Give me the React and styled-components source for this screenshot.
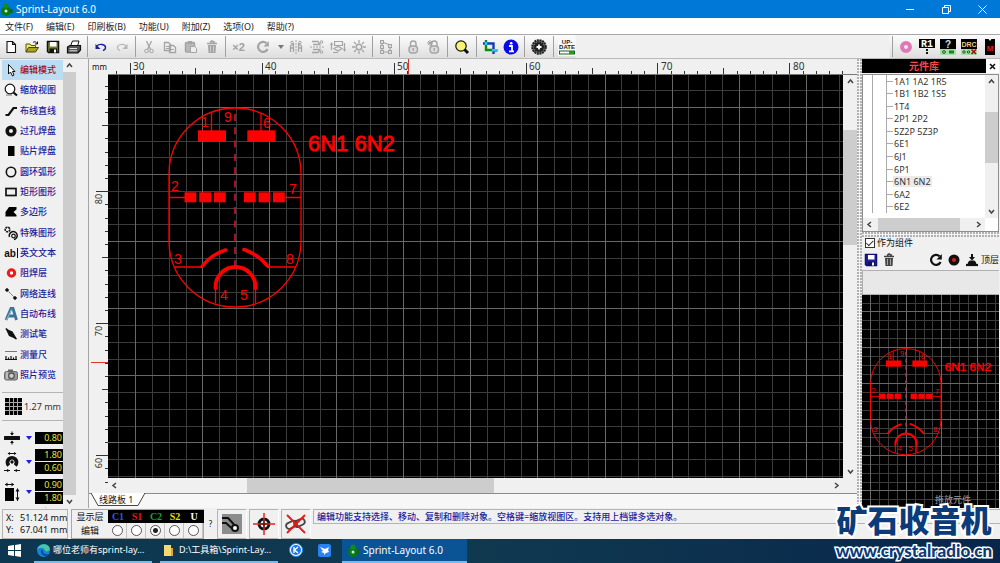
import React, { useEffect, useRef, useState } from "react";
import styled, { createGlobalStyle } from "styled-components";

const Global = createGlobalStyle`
  * { box-sizing: border-box; }
  html, body { margin: 0; padding: 0; }
  body { font-family: "Noto Sans", "Noto Sans CJK SC", sans-serif; font-size: 9px; line-height: 12px; color: #111; background: #f0f0f0; }
  button, input { font: inherit; color: inherit; }
  button { border: 0; padding: 0; margin: 0; background: none; }
  ul { list-style: none; margin: 0; padding: 0; }
`;

/* ---------- frame ---------- */
const Window = styled.div`
  display: flex;
  flex-direction: column;
  height: 100vh;
  min-height: 560px;
  min-width: 900px;
  overflow: hidden;
  position: relative;
`;

const TitleBar = styled.header`
  display: flex;
  align-items: center;
  height: 18px;
  background: #0078d7;
  color: #fff;
`;
const AppTitle = styled.h1`
  flex: 1;
  margin: 0 0 0 2px;
  font-size: 10px;
  line-height: 18px;
  font-weight: 400;
`;
const CaptionButton = styled.button`
  width: 36px;
  height: 18px;
  display: grid;
  place-items: center;
`;

const MenuBar = styled.nav`
  display: flex;
  gap: 13px;
  height: 16px;
  padding: 0 5px;
  background: #fff;
`;
const MenuItem = styled.button`
  line-height: 15px;
  white-space: nowrap;
  color: #222;
`;

const ToolBar = styled.div`
  display: flex;
  align-items: stretch;
  height: 25px;
  border-top: 1px solid #a8aaa8;
  border-bottom: 1px solid #b8bab8;
  background: linear-gradient(90deg, transparent 575px, #f0f0f0 576px calc(100% - 111px), transparent calc(100% - 110px)),
    linear-gradient(#fcfcfc, #dedede);
`;
const ToolButton = styled.button`
  width: ${(p) => p.$w || 21}px;
  display: grid;
  place-items: center;
`;
const Separator = styled.span`
  width: 6px;
  display: flex;
  justify-content: center;
  padding: 1px 0;
  &::before { content: ""; width: 1px; background: #a0a0a0; }
`;
const Spacer = styled.span`
  flex: 1;
`;

const Work = styled.main`
  flex: 1;
  min-height: 0;
  display: grid;
  grid-template-columns: 88px minmax(0, 1fr) 5px 138px;
`;

/* ---------- left tool column ---------- */
const ToolColumn = styled.aside`
  display: grid;
  grid-template-columns: 63px 13px;
  min-height: 0;
  overflow: hidden;
`;
const ToolBody = styled.div`
  padding-left: 2px;
  padding-top: 1px;
  overflow: hidden;
`;
const ModeList = styled.ul`
  display: grid;
  grid-template-rows: repeat(16, 1fr);
  height: 325px;
`;
const ModeButton = styled.button`
  display: grid;
  grid-template-columns: 18px 1fr;
  align-items: center;
  text-align: left;
  width: 100%;
  height: 100%;
  white-space: nowrap;
  font-weight: 500;
  color: ${(p) => (p.$on ? "#a01020" : "#1c1c9c")};
  background: ${(p) => (p.$on ? "#bcdcf4" : "transparent")};
  & > svg { justify-self: center; }
`;
const GridButton = styled.button`
  display: flex;
  align-items: center;
  justify-content: space-between;
  width: 100%;
  height: 29px;
  margin-top: 7px;
  padding: 0 2px 0 3px;
  border: solid #b4b4b4;
  border-width: 1px 0;
  color: #333;
`;
const SizeRow = styled.div`
  display: grid;
  grid-template-columns: 20px 13px 28px;
  align-items: center;
  margin-top: ${(p) => p.$gap}px;
  & > svg { justify-self: center; }
`;
const SizeFields = styled.div`
  display: grid;
  gap: 1px;
`;
const SizeField = styled.input`
  width: 28px;
  height: 12px;
  border: 0;
  padding: 0 1px 0 0;
  background: #000;
  color: #e4e42c;
  text-align: right;
`;

/* ---------- scroll bars ---------- */
const Bar = styled.div`
  display: flex;
  flex-direction: ${(p) => (p.$h ? "row" : "column")};
  background: #f0f0f0;
  min-width: 0;
  min-height: 0;
`;
const Arrow = styled.button`
  flex: 0 0 13px;
  display: grid;
  place-items: center;
`;
const Track = styled.div`
  flex: 1;
  display: flex;
  flex-direction: inherit;
  min-width: 0;
  min-height: 0;
`;
const Before = styled.span`
  flex: ${(p) => p.$n} 0 0;
`;
const Thumb = styled.span`
  flex: ${(p) => p.$n} 0 0;
  background: #cdcdcd;
`;

/* ---------- board ---------- */
const Board = styled.section`
  display: grid;
  grid-template-columns: 19px minmax(0, 1fr) 14px;
  grid-template-rows: 16px minmax(0, 1fr) 15px 15px;
  border-left: 1px solid #a4a4a4;
  min-height: 0;
`;
const Unit = styled.span`
  padding-left: 3px;
  line-height: 16px;
  font-size: 8px;
`;
const Drawing = styled.svg`
  display: block;
  width: 100%;
  height: 100%;
  overflow: hidden;
  background: ${(p) => p.$bg || "transparent"};
`;
const TopRulerCell = styled.div`
  grid-column: 2 / 4;
  min-width: 0;
`;
const SideRulerCell = styled.div`
  grid-row: 2 / 4;
  min-height: 0;
`;
const TabStrip = styled.div`
  grid-column: 1 / 4;
  display: flex;
  background: #f7f7f7;
  border-top: 1px solid #8c8c8c;
`;
const BoardTab = styled.button`
  position: relative;
  width: 60px;
  height: 14px;
  margin-top: -1px;
  & > svg { display: block; }
`;
const TabText = styled.span`
  position: absolute;
  left: 10px;
  top: 1px;
  white-space: nowrap;
`;
const Splitter = styled.div`
  background: radial-gradient(circle at 1px 1px, #b0b0b0 1px, transparent 1px) 0 0 / 3px 3px #f4f4f4;
  height: ${(p) => (p.$h ? `${p.$h}px` : "auto")};
`;

/* ---------- library ---------- */
const Library = styled.aside`
  display: flex;
  flex-direction: column;
  min-height: 0;
  padding-right: 1px;
`;
const LibraryHead = styled.div`
  display: flex;
  flex: 0 0 14px;
  background: #000;
`;
const LibraryTitle = styled.h2`
  flex: 1;
  margin: 0;
  text-align: center;
  font-size: 10px;
  line-height: 14px;
  font-weight: 700;
  color: #f8484c;
`;
const CloseButton = styled.button`
  width: 13px;
  display: grid;
  place-items: center;
  background: #fff;
`;
const ListBox = styled.div`
  flex: 0 0 158px;
  margin-top: 1px;
  display: grid;
  grid-template-columns: minmax(0, 1fr) 13px;
  grid-template-rows: minmax(0, 1fr) 13px;
  border: 1px solid #8f8f8f;
  background: #fff;
`;
const Tree = styled.ul`
  display: grid;
  grid-template-rows: repeat(11, 1fr);
  height: 138px;
  margin-left: 9px;
  padding-left: 13px;
  border-left: 1px solid #aaa;
`;
const Leaf = styled.li`
  display: flex;
  align-items: center;
  border-left: 1px solid #aaa;
  color: #333;
  &::before { content: ""; width: 6px; height: 1px; background: #aaa; }
`;
const LeafText = styled.button`
  padding: 0 1px;
  line-height: 11px;
  background: ${(p) => (p.$on ? "#ebebeb" : "transparent")};
`;
const CheckLabel = styled.label`
  display: flex;
  align-items: center;
  gap: 2px;
  height: 12px;
  padding-left: 3px;
`;
const Check = styled.input`
  appearance: none;
  width: 10px;
  height: 10px;
  margin: 0;
  border: 1px solid #333;
  background: #fff;
  display: grid;
  place-items: center;
  &:checked::after {
    content: "";
    width: 6px;
    height: 3px;
    border: solid #333;
    border-width: 0 0 1px 1px;
    transform: rotate(-45deg) translate(0, -1px);
  }
`;
const LibraryTools = styled.div`
  display: flex;
  align-items: center;
  height: 21px;
`;
const LibraryTool = styled.button`
  width: 18px;
  display: grid;
  place-items: center;
`;
const NameStrip = styled.div`
  flex: 0 0 25px;
  border: 1px solid #b0b0b0;
  border-right: 0;
  background: #e8e8e8;
`;
const Preview = styled.div`
  flex: 1;
  min-height: 0;
  position: relative;
`;
const DropHint = styled.span`
  position: absolute;
  right: 28px;
  bottom: 2px;
  color: #a0a0a0;
`;

/* ---------- status ---------- */
const StatusBar = styled.footer`
  display: flex;
  align-items: stretch;
  height: 31px;
  padding: 1px 0 0 2px;
`;
const Coordinates = styled.dl`
  display: grid;
  grid-template-columns: 14px 1fr;
  align-content: center;
  width: 66px;
  margin: 0 3px 0 0;
  padding: 0 3px 0 3px;
  border: 1px solid #b4b4b4;
  font-size: 9px;
`;
const Term = styled.dt``;
const Value = styled.dd`
  margin: 0;
  text-align: right;
  white-space: nowrap;
`;
const LayerSet = styled.div`
  display: flex;
  border: 1px solid #a8a8a8;
`;
const LayerCaption = styled.div`
  width: 36px;
  display: grid;
  grid-template-rows: 14px 14px;
  text-align: center;
  line-height: 14px;
  font-size: 9px;
`;
const Layer = styled.label`
  width: 19px;
  display: grid;
  grid-template-rows: 13px 1fr;
  place-items: center;
  border-right: 1px solid #c4c4c4;
`;
const LayerName = styled.span`
  width: 20px;
  margin-right: -1px;
  background: #000;
  color: ${(p) => p.$c};
  text-align: center;
  font: 700 10px/13px "Liberation Serif", serif;
`;
const Radio = styled.input`
  appearance: none;
  width: 11px;
  height: 11px;
  margin: 0;
  border: 1px solid #555;
  border-radius: 50%;
  background: #fff;
  &:checked { background: radial-gradient(circle, #222 2px, #fff 3px); }
`;
const HelpButton = styled.button`
  width: 13px;
  font-size: 8px;
`;
const StatusButton = styled.button`
  width: 30px;
  margin-right: 2px;
  display: grid;
  place-items: center;
  border: 1px solid #b4b4b4;
  border-right-color: #fff;
`;
const Hint = styled.p`
  flex: 1;
  margin: 0;
  height: 15px;
  padding-left: 3px;
  border: 1px solid #b4b4b4;
  border-right: 0;
  line-height: 14px;
  font-weight: 500;
  color: #1c1c9c;
  white-space: nowrap;
`;

const TaskBar = styled.footer`
  display: flex;
  height: 24px;
  gap: 8px;
  background: linear-gradient(90deg, #0d3650, #103a50 45%, #08264c);
  color: #fff;
`;
const Task = styled.button`
  display: flex;
  align-items: center;
  gap: ${(p) => p.$gap || 3}px;
  width: ${(p) => p.$w}px;
  padding-left: ${(p) => p.$pad || 3}px;
  font-size: ${(p) => (p.$on ? 10 : 9)}px;
  white-space: nowrap;
  background: ${(p) => (p.$on ? "#0a5495" : "transparent")};
  border-bottom: 2px solid ${(p) => (p.$line ? "#76b9ed" : "transparent")};
  & > svg { flex: none; }
`;

const Watermark = styled.div`
  position: absolute;
  right: 6px;
  bottom: 0;
  width: 160px;
  text-align: center;
  color: #0b3b78;
  -webkit-text-stroke: 4px #fff;
  paint-order: stroke fill;
  white-space: nowrap;
`;
const MarkName = styled.div`
  font: 900 31px/40px "Noto Sans CJK SC", sans-serif;
`;
const MarkUrl = styled.a`
  display: block;
  color: inherit;
  text-decoration: none;
  -webkit-text-stroke: 3px #fff;
  font: 900 17px/24px Lato, sans-serif;
`;

/* ---------- icons ---------- */
const G = "#a4a4a4";
const Icon = ({ w = 16, h = 16, children }) => (
  <svg width={w} height={h} viewBox={`0 0 ${w} ${h}`} fill="none" stroke="#111" strokeWidth="1" aria-hidden="true">
    {children}
  </svg>
);
const Chevron = ({ dir }) => (
  <svg width="7" height="7" viewBox="0 0 7 7" fill="none" stroke="#444" strokeWidth="1.5" aria-hidden="true">
    <path d={{ up: "M1 5L3.5 2L6 5", down: "M1 2L3.5 5L6 2", left: "M5 1L2 3.5L5 6", right: "M2 1L5 3.5L2 6" }[dir]} />
  </svg>
);
const Logo = () => (
  <Icon w={14} h={14}>
    <g stroke="none"><circle cx="6" cy="9" r="5" fill="#0a7a18" /><circle cx="6" cy="4" r="2.6" fill="#118a20" /><circle cx="11" cy="9" r="2.2" fill="#0d6c18" /><circle cx="6" cy="9" r="1.5" fill="#c8f0c0" /></g>
  </Icon>
);
const Trash = ({ c = G }) => (
  <Icon>
    <path d="M3 4.5H13M6 3.5L8 2L11 3.5" stroke={c} strokeWidth="1.6" />
    <path d="M4 6H12L11.5 14H4.5Z" fill={c} stroke="none" />
    <path d="M6.5 7V13M9.5 7V13" stroke="#e8e8e8" strokeWidth=".6" />
  </Icon>
);
const Lock = ({ star }) => (
  <Icon>
    <rect x="4" y="7" width="8.5" height="7" rx="3" fill="#ddd" stroke={G} strokeWidth="1.4" />
    <path d="M5.5 7V4.5C5.5 1.2 11 1.2 11 4.5V7M8.2 9V12" stroke={G} strokeWidth="1.4" />
    {star && <path d="M2 2L6 6M6 2L2 6M4 1V7M1 4H7" stroke={G} />}
  </Icon>
);
const Rotate = ({ c = G }) => (
  <Icon><path d="M12.6 10A5 5 0 1 1 11.5 4.2" stroke={c} strokeWidth="2.2" /><path d="M13.8 2V7.5H8.5Z" fill={c} stroke="none" /></Icon>
);
const Floppy = ({ c = "#111", f = "#7c7c28" }) => (
  <Icon w={14} h={14}><path d="M1.5 1.5H12.5V12.5H2.5L1.5 11.5Z" fill={f} stroke={c} strokeWidth="1.5" /><rect x="4" y="2" width="6.5" height="4.5" fill="#fff" stroke="none" /><rect x="3.5" y="8.5" width="7.5" height="4" fill={c} stroke="none" /><rect x="8" y="9.5" width="2" height="3" fill="#fff" stroke="none" /></Icon>
);

const icons = {
  new: <Icon><path d="M4 2.5H9.5L12.5 5.5V13.5H4ZM9.5 2.5V5.5H12.5" fill="#fff" strokeWidth="1.1" /></Icon>,
  open: <Icon><path d="M2 13V5H6L7 6.5H11.5V8" fill="#f0ec60" stroke="#555510" /><path d="M2 13L4.5 8.5H14.5L11.5 13Z" fill="#a8a420" stroke="#444410" /><path d="M9 3.5C11 2 12.5 3 13 5M13.5 2.5V5H11" /></Icon>,
  save: <Floppy />,
  print: <Icon><path d="M4.5 7L6.5 2H13L11.5 7" fill="#fff" /><path d="M1.5 8L4 6.5H14.5V11L12 14H1.5Z" fill="#555" strokeWidth="1.2" /><path d="M3.5 9.5H11M3.5 11.8H11" stroke="#e0e0e0" /></Icon>,
  undo: <Icon><path d="M4 7C6 4.5 12.5 5 12.5 8.5C12.5 10 11.5 11 10 11.5" stroke="#1c1c9c" strokeWidth="1.4" /><path d="M2.5 5V10H7.5Z" fill="#1c1c9c" stroke="none" /></Icon>,
  redo: <Icon><path d="M12 7C10 4.5 3.5 5 3.5 8.5C3.5 10 4.5 11 6 11.5" stroke="#b4b4b4" strokeWidth="1.2" /><path d="M13.5 5V10H8.5Z" fill="#b4b4b4" stroke="none" /></Icon>,
  cut: <Icon><path d="M5.5 2L9.5 10.5M10.5 2L6.5 10.5" stroke={G} strokeWidth="1.3" /><circle cx="5.5" cy="12" r="1.8" stroke={G} /><circle cx="10.5" cy="12" r="1.8" stroke={G} /></Icon>,
  copy: <Icon><path d="M2.5 3.5H6.5L8.5 5.5V11.5H2.5ZM7.5 6.5H11.5L13.5 8.5V13.5H7.5Z" fill="#eee" stroke={G} strokeWidth="1.3" /><path d="M4 7.5H7M4 9.5H7M9 10.5H12" stroke={G} /></Icon>,
  paste: <Icon><rect x="2.5" y="3.5" width="9" height="9.5" rx="1" fill="#b8b8b8" stroke={G} strokeWidth="1.5" /><path d="M5 3.5H9" stroke={G} strokeWidth="3" /><path d="M7.5 7.5H11.5L13.5 9.5V13.5H7.5Z" fill="#eee" stroke={G} /></Icon>,
  trash: <Trash />,
  rotate: <Rotate />,
  mirrorH: <Icon><path d="M8 1V15" stroke={G} strokeDasharray="2 1" /><path d="M2.5 13V7L5.5 5V13M13.5 13V7L10.5 5V13M5.5 9H2.5M10.5 9H13.5" stroke={G} strokeWidth="1.3" /><circle cx="4" cy="3.5" r="1.3" stroke={G} /><circle cx="12" cy="3.5" r="1.3" stroke={G} /></Icon>,
  mirrorV: <Icon><path d="M1 8H15" stroke={G} strokeDasharray="2 1" /><path d="M3 2.5H9L11 5.5H4M3 13.5H9L11 10.5H4" stroke={G} strokeWidth="1.3" /><circle cx="12.5" cy="3" r="1.3" stroke={G} /><circle cx="12.5" cy="13" r="1.3" stroke={G} /></Icon>,
  align: <Icon><path d="M4.5 2.5H12.5V6.5H4.5ZM4 9.5L8 7.5L12 9.5L8 12ZM1.5 4V11M14.5 4V11M3 13.5H8" stroke={G} strokeWidth="1.2" /><path d="M0 6L1.5 3L3 6ZM13 10L14.5 13L16 10Z" fill={G} stroke="none" /></Icon>,
  burst: <Icon><circle cx="8" cy="8" r="2.8" stroke={G} strokeWidth="1.5" /><path d="M8 1V4M8 12V15M1 8H4M12 8H15M3 3L5 5M11 11L13 13M13 3L11 5M5 11L3 13" stroke={G} strokeWidth="1.3" /></Icon>,
  nodes: <Icon><path d="M4 3L12 6M4 3V13H12V7" stroke={G} strokeWidth="1.2" /><rect x="2.5" y="1.5" width="3" height="3" fill="#ddd" stroke={G} /><rect x="2.5" y="6.5" width="3" height="3" fill="#ddd" stroke={G} /><rect x="2.5" y="11.5" width="3" height="3" fill="#ddd" stroke={G} /><rect x="10.5" y="5.5" width="3" height="3" fill="#ddd" stroke={G} /><rect x="10.5" y="11.5" width="3" height="3" fill="#ddd" stroke={G} /></Icon>,
  lock: <Lock />,
  unlock: <Lock star />,
  zoom: <Icon><circle cx="7" cy="7" r="5.2" fill="#f8f470" strokeWidth="1.2" /><path d="M10.5 10.5L14 14" strokeWidth="3" /></Icon>,
  crop: <Icon><path d="M4 1V11H12" stroke="#0c8c0c" strokeWidth="2.4" /><path d="M1 4.5H11.5V15M12 11.5H15" stroke="#1838b8" strokeWidth="2.4" /><path d="M4 3V6M10 11.3H16" stroke="#30c8e8" strokeWidth="2.4" /></Icon>,
  info: <Icon><circle cx="8" cy="8" r="7.5" fill="#0808e8" stroke="none" /><path d="M6 7H9V12M6 12.3H11" stroke="#fff" strokeWidth="1.8" /><circle cx="8.2" cy="4.2" r="1.3" fill="#fff" stroke="none" /></Icon>,
  gear: <Icon><circle cx="8" cy="8" r="6.8" fill="#777" stroke="#222" strokeWidth="2" strokeDasharray="2 .7" /><circle cx="8" cy="8" r="4.6" fill="#222" stroke="#222" strokeWidth="2" strokeDasharray="1.6 .8" /><path d="M8 5.5V10.5M5.5 8H10.5" stroke="#fff" strokeWidth="1.8" /></Icon>,
  update: <Icon w={18} h={18}><rect width="18" height="18" fill="#f8f8f8" stroke="none" /><g fill="#222" stroke="none" fontFamily="Liberation Sans, sans-serif" fontWeight="700" fontSize="6" textAnchor="middle"><text x="9" y="6">UP-</text><text x="9" y="11">DATE</text></g><rect x="1.5" y="13" width="15" height="3" fill="#fff" stroke="#186818" /><rect x="11" y="13" width="5" height="3" fill="#18a018" stroke="none" /></Icon>,
  ring: <Icon><circle cx="8" cy="8" r="4" stroke="#e078b8" strokeWidth="4" /></Icon>,
  r1: <Icon><rect x="0" y="0" width="16" height="9" fill="#000" stroke="none" /><text x="8" y="8" fill="#fff" stroke="none" fontFamily="Liberation Mono, monospace" fontWeight="700" fontSize="10" textAnchor="middle">R1</text><path d="M8 10V15" strokeWidth="2" strokeDasharray="2 1" /></Icon>,
  query: <Icon><rect x="0" y="0" width="16" height="10" fill="#000" stroke="none" /><text x="8" y="9" fill="#c0e0f8" stroke="none" fontFamily="Liberation Sans, sans-serif" fontWeight="700" fontSize="10" textAnchor="middle">?</text><rect x="0" y="10" width="16" height="6" fill="#a8dca8" stroke="none" /><circle cx="4" cy="13" r="1.4" stroke="#186018" /><rect x="9" y="11.5" width="5" height="3" fill="#108818" stroke="none" /></Icon>,
  drc: <Icon><rect x="0" y="0" width="16" height="10" fill="#000" stroke="none" /><text x="8" y="8" fill="#e8c890" stroke="none" fontFamily="Liberation Sans, sans-serif" fontWeight="700" fontSize="7" textAnchor="middle">DRC</text><rect x="0" y="10" width="16" height="6" fill="#a8dca8" stroke="none" /><circle cx="3" cy="13" r="1.2" stroke="#186018" /><circle cx="7.5" cy="13" r="1.2" stroke="#186018" /><path d="M10.5 10.5L15 15M15 10.5L10.5 15" stroke="#a01010" strokeWidth="1.6" /></Icon>,
  macro: <Icon w={10}><path d="M0 0H3.5L5 2L6.5 0H10V16H0Z" fill="#000" stroke="none" /><text x="5" y="12" fill="#e81818" stroke="none" fontFamily="Liberation Sans, sans-serif" fontWeight="700" fontSize="8" textAnchor="middle">M</text></Icon>,
};

const modeIcons = {
  pointer: <Icon><path d="M5.5 2.5V12L7.5 10L9.5 14L11 13L9.5 9.5H12Z" fill="#fff" /></Icon>,
  lens: <Icon><circle cx="7" cy="7" r="4.8" fill="#fff" strokeWidth="1.2" /><path d="M10.5 10.5L14 13.5" strokeWidth="2.2" /><path d="M3 13H9" stroke="#777" /></Icon>,
  track: <Icon><path d="M2.5 12H5.5L10.5 5H14" strokeWidth="2.2" /></Icon>,
  pad: <Icon><circle cx="8" cy="8" r="3.8" strokeWidth="3.6" /></Icon>,
  smd: <Icon><rect x="5" y="3" width="6.5" height="10" fill="#000" stroke="none" /></Icon>,
  arc: <Icon><circle cx="8" cy="8" r="4.7" strokeWidth="1.6" /></Icon>,
  rect: <Icon><rect x="3" y="4.5" width="10" height="7" strokeWidth="1.7" /></Icon>,
  zone: <Icon><path d="M6 3H13.5V5.5L10.5 8L13.5 11V12.5H2.5V8Z" fill="#000" stroke="none" /></Icon>,
  special: <Icon><circle cx="4.5" cy="4.5" r="2.3" strokeWidth="1.6" strokeDasharray="2 .6" /><path d="M6.5 12A4 4 0 1 1 11 14.5" strokeWidth="1.5" /><circle cx="10.5" cy="11" r="1.8" strokeWidth="1.2" /></Icon>,
  text: <Icon><text x="7" y="12" fill="#111" stroke="none" fontFamily="Liberation Sans, sans-serif" fontWeight="700" fontSize="10" textAnchor="middle">ab</text><path d="M14.5 3V13" /></Icon>,
  mask: <Icon><circle cx="8.5" cy="8" r="3.2" stroke="#f01818" strokeWidth="3" fill="#fff" /></Icon>,
  net: <Icon><path d="M4 4L12 12" strokeDasharray="2 1" stroke="#555" /><circle cx="4" cy="4" r="1.3" fill="#111" /><circle cx="12" cy="12" r="1.3" fill="#111" /></Icon>,
  auto: <Icon><path d="M3 14L8 2.5H10L13.5 14M5.5 10H11.5" stroke="#3c7498" strokeWidth="2.8" /><path d="M3.5 14L8.5 3.5" stroke="#98c4d8" /></Icon>,
  probe: <Icon><path d="M3 2.5L13 13" strokeWidth="1.3" /><path d="M4 4L9 6L12.5 12L6.5 9.5Z" fill="#111" strokeWidth="1.5" /></Icon>,
  measure: <Icon><path d="M2 4.5H14" stroke="#777" /><path d="M2 12.5H14M3 12V9M5.5 12V10.5M8 12V9M10.5 12V10.5M13 12V9" strokeWidth="1.2" /></Icon>,
  photo: <Icon><rect x="1.5" y="4.5" width="13" height="8.5" rx="2" fill="#999" stroke="#666" /><path d="M5 3.5H10" stroke="#666" strokeWidth="2" /><circle cx="8.5" cy="8.8" r="2.8" fill="#ccc" stroke="#555" strokeWidth="1.3" /><path d="M4 5V12" stroke="#ddd" /></Icon>,
};

const modes = [
  ["pointer", "编辑模式"], ["lens", "缩放视图"], ["track", "布线直线"], ["pad", "过孔焊盘"],
  ["smd", "贴片焊盘"], ["arc", "圆环弧形"], ["rect", "矩形图形"], ["zone", "多边形"],
  ["special", "特殊图形"], ["text", "英文文本"], ["mask", "阻焊层"], ["net", "网络连线"],
  ["auto", "自动布线"], ["probe", "测试笔"], ["measure", "测量尺"], ["photo", "照片预览"],
];

const leftTools = [
  ["new", "新建"], ["open", "打开"], ["save", "保存"], ["print", "打印"], null,
  ["undo", "撤销"], ["redo", "重做"], null,
  ["cut", "剪切"], ["copy", "复制"], ["paste", "粘贴"], ["trash", "删除"], null,
  ["x2", "×2"], ["rotate", "旋转", 28], ["drop", "角度", 8], ["mirrorH", "水平镜像"], ["mirrorV", "垂直镜像"],
  ["align", "对齐"], ["burst", "吸附"], null, ["nodes", "连接"], null,
  ["lock", "组合"], ["unlock", "取消组合"], null, ["zoom", "缩放", 23], null,
  ["crop", "裁切"], ["info", "信息"], null, ["gear", "设置", 23], null, ["update", "更新", 22],
];
const rightTools = [["ring", "热焊盘"], ["r1", "元件"], ["query", "属性"], ["drc", "规则检查"], ["macro", "元件库"]];

const TimesTwo = styled.span`
  font: 700 11px/20px "Liberation Sans", sans-serif;
  color: #a0a0a0;
`;
const toolFace = (id) => {
  if (id === "x2") return <TimesTwo>×2</TimesTwo>;
  if (id === "drop") return <Icon w={6} h={4}><path d="M0 0H6L3 4Z" fill="#777" stroke="none" /></Icon>;
  return icons[id];
};

/* ---------- drawing parts ---------- */
const range = (n) => Array.from({ length: Math.max(0, n) }, (_, i) => i);

// Size of the drawing area, so that rulers only carry the labels that fit.
function useSize() {
  const ref = useRef(null);
  const [size, setSize] = useState({ width: 0, height: 0 });
  useEffect(() => {
    const measure = () => {
      const r = ref.current.getBoundingClientRect();
      setSize({ width: r.width, height: r.height });
    };
    measure();
    window.addEventListener("resize", measure);
    return () => window.removeEventListener("resize", measure);
  }, []);
  return [ref, size];
}

function GridLines({ step, x0, y0, count }) {
  const lines = [];
  range(count).forEach((i) => {
    const c = i % 4 === 0 ? "#686868" : "#3c3c3c";
    const x = Math.round(x0 + i * step) + 0.5;
    const y = Math.round(y0 + i * step) + 0.5;
    lines.push(<path key={`v${i}`} d={`M${x} 0V3000`} stroke={c} />, <path key={`h${i}`} d={`M0 ${y}H3000`} stroke={c} />);
  });
  return <g>{lines.filter((l) => l.props.stroke === "#3c3c3c")}{lines.filter((l) => l.props.stroke !== "#3c3c3c")}</g>;
}

const pins = [["1", 37, 20], ["9", 60, 15], ["6", 99, 21], ["2", 7, 84], ["7", 125, 87], ["3", 10, 157], ["8", 122, 157], ["4", 56, 193], ["5", 76, 193]];

function Tube({ thin = 1.3 }) {
  return (
    <g fill="none" stroke="#f00" strokeWidth={thin}>
      <path d="M1 67A66 66 0 0 1 133 67V134A66 66 0 0 1 1 134Z" />
      <path d="M67 1V160" strokeDasharray="7 6.3" strokeDashoffset="-6" stroke="#e0102c" strokeWidth={thin * 1.2} />
      <path d="M43.5 6V24M93 6V24M1 90.5H17M117 90.5H133M7 160H34M100 160H127M47.5 180V196M87.5 180V196" />
      <g fill="#f00" stroke="none">
        <rect x="30" y="23.3" width="28" height="11.7" />
        <rect x="79.3" y="23.3" width="28" height="11.7" />
        {[16.5, 31.2, 46, 76, 90.5, 105].map((x) => <rect key={x} x={x} y="85.3" width="11.8" height="10" />)}
      </g>
      <path d="M34 159.5Q43 147.5 57.5 143M76 142.5Q91 148 100 159.5" strokeWidth="3.6" strokeLinecap="round" />
      <path d="M47.5 181V180A20 20 0 0 1 87.5 180V181" strokeWidth="3.8" strokeLinecap="round" />
      <g fill="#f00" stroke="none" fontFamily="Liberation Sans, sans-serif" fontSize="14" textAnchor="middle">
        {pins.map(([t, x, y]) => <text key={t} x={x} y={y}>{t}</text>)}
      </g>
      <text x="140" y="44" fill="#f00" strokeWidth="0.8" fontFamily="Liberation Sans, sans-serif" fontSize="22">6N1 6N2</text>
    </g>
  );
}

function TopRuler() {
  const [ref, { width }] = useSize();
  return (
    <Drawing ref={ref}>
      <path d="M0 15.5H3000" stroke="#777" />
      {range(Math.floor(width / 13.2)).map((i) => {
        const x = Math.round(8.3 + i * 13.2) + 0.5;
        const n = i + 29;
        const top = n % 10 === 0 ? 4 : n % 5 === 0 ? 9 : 12;
        return <path key={i} d={`M${x} ${top}V15`} stroke="#333" />;
      })}
      <g fill="#333" fontFamily="Noto Sans, sans-serif" fontSize="10">
        {range(Math.floor((width - 40) / 132) + 1).map((k) => <text key={k} x={25 + k * 132} y="11">{30 + k * 10}</text>)}
      </g>
      <path d="M300.5 0V15" stroke="#e03030" />
    </Drawing>
  );
}

function SideRuler() {
  const [ref, { height }] = useSize();
  return (
    <Drawing ref={ref}>
      {range(Math.ceil(height / 13.2)).map((i) => {
        const y = Math.round(10.6 + i * 13.2) + 0.5;
        const n = 88 - i;
        const left = n % 10 === 0 ? 7 : n % 5 === 0 ? 13 : 16;
        return <path key={i} d={`M${left} ${y}H19`} stroke="#333" />;
      })}
      <g fill="#333" fontFamily="Noto Sans, sans-serif" fontSize="9" textAnchor="middle">
        {range(Math.floor((height - 130) / 132) + 1).map((k) => <text key={k} transform={`translate(13 ${124 + k * 132}) rotate(-90)`}>{80 - k * 10}</text>)}
      </g>
      <path d="M2 287.5H19" stroke="#e03030" />
    </Drawing>
  );
}

function ScrollBar({ h, parts, label }) {
  return (
    <Bar $h={h}>
      <Arrow aria-label={`${label} -`}><Chevron dir={h ? "left" : "up"} /></Arrow>
      <Track><Before $n={parts[0]} /><Thumb $n={parts[1]} /><Before $n={parts[2]} /></Track>
      <Arrow aria-label={`${label} +`}><Chevron dir={h ? "right" : "down"} /></Arrow>
    </Bar>
  );
}

const layers = [["C1", "#2858f0"], ["S1", "#e01818"], ["C2", "#18a028"], ["S2", "#e8e010"], ["U", "#fff"]];
const library = ["1A1 1A2 1R5", "1B1 1B2 1S5", "1T4", "2P1 2P2", "5Z2P 5Z3P", "6E1", "6J1", "6P1", "6N1 6N2", "6A2", "6E2"];
const BlueDrop = () => <Icon w={6} h={4}><path d="M0 0H6L3 4Z" fill="#2020e0" stroke="none" /></Icon>;

export default function App() {
  return (
    <Window>
      <Global />
      <TitleBar>
        <Logo />
        <AppTitle>Sprint-Layout 6.0</AppTitle>
        <CaptionButton aria-label="最小化"><Icon w={9} h={9}><path d="M0 4.5H8" stroke="#fff" /></Icon></CaptionButton>
        <CaptionButton aria-label="还原"><Icon w={9} h={9}><path d="M.5 2.5H6.5V8.5H.5ZM2.5 2V.5H8.5V6.5H7" stroke="#fff" /></Icon></CaptionButton>
        <CaptionButton aria-label="关闭"><Icon w={9} h={9}><path d="M.5 .5L8.5 8.5M8.5 .5L.5 8.5" stroke="#fff" /></Icon></CaptionButton>
      </TitleBar>
      <MenuBar>
        {["文件(F)", "编辑(E)", "印刷板(B)", "功能(U)", "附加(Z)", "选项(O)", "帮助(?)"].map((m) => <MenuItem key={m}>{m}</MenuItem>)}
      </MenuBar>
      <ToolBar>
        {leftTools.map((t, i) => (t ? <ToolButton key={t[0]} $w={t[2]} aria-label={t[1]}>{toolFace(t[0])}</ToolButton> : <Separator key={i} />))}
        <Spacer />
        <Separator />
        {rightTools.map(([id, name]) => <ToolButton key={id} aria-label={name}>{icons[id]}</ToolButton>)}
      </ToolBar>

      <Work>
        <ToolColumn>
          <ToolBody>
            <ModeList>
              {modes.map(([id, name], i) => (
                <li key={id}><ModeButton $on={i === 0}>{modeIcons[id]}<span>{name}</span></ModeButton></li>
              ))}
            </ModeList>
            <GridButton>
              <Icon w={17} h={17}><rect width="17" height="17" fill="#000" stroke="none" /><path d="M4.5 0V17M8.5 0V17M12.5 0V17M0 4.5H17M0 8.5H17M0 12.5H17" stroke="#aaa" /></Icon>
              1.27 mm
            </GridButton>
            <SizeRow $gap={9}>
              <Icon><path d="M1 8H15" strokeWidth="4" strokeLinecap="round" /><path d="M8 1.5V5M8 11V14.5" /><path d="M6 3L8 5.5L10 3ZM6 13L8 10.5L10 13Z" fill="#111" stroke="none" /></Icon>
              <BlueDrop />
              <SizeFields><SizeField aria-label="线宽" defaultValue="0.80" /></SizeFields>
            </SizeRow>
            <SizeRow $gap={3}>
              <Icon h={22}><path d="M4.8 14.5A4.5 4.5 0 1 1 11.2 14.5" strokeWidth="3.8" /><circle cx="8" cy="11" r="1.2" fill="#111" /><path d="M4 2.5H12M0 19.5H6M10 19.5H16" /><path d="M6 1V4L3.5 2.5ZM10 1V4L12.5 2.5ZM3 18V21L6 19.5ZM13 18V21L10 19.5Z" fill="#111" stroke="none" /></Icon>
              <BlueDrop />
              <SizeFields><SizeField aria-label="焊盘外径" defaultValue="1.80" /><SizeField aria-label="焊盘孔径" defaultValue="0.60" /></SizeFields>
            </SizeRow>
            <SizeRow $gap={5}>
              <Icon h={20}><rect x="1" y="6" width="9" height="13" fill="#000" stroke="none" /><path d="M1 2.5H10M13.5 7V19" /><path d="M3.5 0.5V4.5L1 2.5ZM7.5 .5V4.5L10 2.5ZM11.5 9.5L13.5 6L15.5 9.5ZM11.5 15.5L13.5 19L15.5 15.5Z" fill="#111" stroke="none" /></Icon>
              <BlueDrop />
              <SizeFields><SizeField aria-label="贴片宽" defaultValue="0.90" /><SizeField aria-label="贴片高" defaultValue="1.80" /></SizeFields>
            </SizeRow>
            <SizeRow $gap={3}>
              <span />
              <span />
              <Icon w={18} h={8}><path d="M1 7Q4 2 9 2.5H15V6M5 1L8 2.5L5 5" /></Icon>
            </SizeRow>
          </ToolBody>
          <ScrollBar parts={[0, 1, 0]} label="工具" />
        </ToolColumn>

        <Board>
          <Unit>mm</Unit>
          <TopRulerCell><TopRuler /></TopRulerCell>
          <SideRulerCell><SideRuler /></SideRulerCell>
          <Drawing $bg="#000">
            <GridLines step={16.76} x0={-39.8} y0={-34.9} count={150} />
            <g transform="translate(60 32)"><Tube /></g>
          </Drawing>
          <ScrollBar parts={[42, 115, 220]} label="垂直" />
          <ScrollBar h parts={[126, 246, 336]} label="水平" />
          <span />
          <TabStrip>
            <BoardTab>
              <svg width="60" height="14" viewBox="0 0 60 14" aria-hidden="true"><path d="M2 0L9 12.5H49L56 0" fill="#fff" stroke="#444" /></svg>
              <TabText>线路板 1</TabText>
            </BoardTab>
          </TabStrip>
        </Board>

        <Splitter />

        <Library>
          <LibraryHead>
            <LibraryTitle>元件库</LibraryTitle>
            <CloseButton aria-label="关闭元件库"><Icon w={7} h={7}><path d="M1 1L6 6M6 1L1 6" strokeWidth="1.6" /></Icon></CloseButton>
          </LibraryHead>
          <ListBox>
            <Tree>
              {library.map((n) => <Leaf key={n}><LeafText $on={n === "6N1 6N2"}>{n}</LeafText></Leaf>)}
            </Tree>
            <ScrollBar parts={[24, 50, 41]} label="列表" />
            <ScrollBar h parts={[2, 82, 12]} label="列表横向" />
          </ListBox>
          <Splitter $h={5} />
          <CheckLabel><Check type="checkbox" defaultChecked />作为组件</CheckLabel>
          <LibraryTools>
            <LibraryTool aria-label="保存元件"><Floppy c="#10106c" f="#2020a0" /></LibraryTool>
            <LibraryTool aria-label="删除元件"><Trash c="#444" /></LibraryTool>
            <Spacer />
            <LibraryTool aria-label="旋转元件"><Rotate c="#111" /></LibraryTool>
            <LibraryTool aria-label="焊盘"><Icon w={12} h={12}><circle cx="6" cy="6" r="5.5" fill="#111" stroke="none" /><circle cx="6" cy="6" r="2" fill="#e81818" stroke="none" /></Icon></LibraryTool>
            <LibraryTool aria-label="放置层"><Icon w={14} h={14}><path d="M1 12H13" strokeWidth="2.2" /><path d="M3 10.5L4.5 8H9.5L11 10.5Z" fill="#111" /><path d="M7 1V5" strokeWidth="2" /><path d="M4 4H10L7 7.5Z" fill="#111" stroke="none" /></Icon></LibraryTool>
            <button>顶层</button>
          </LibraryTools>
          <NameStrip />
          <Preview>
            <Drawing $bg="#000">
              <GridLines step={8.95} x0={-28} y0={-19.3} count={160} />
              <g transform="translate(8 53) scale(0.534)"><Tube thin={1.8} /></g>
            </Drawing>
            <DropHint>拖放元件</DropHint>
          </Preview>
        </Library>
      </Work>

      <StatusBar>
        <Coordinates>
          <Term>X:</Term><Value>51.124 mm</Value>
          <Term>Y:</Term><Value>67.041 mm</Value>
        </Coordinates>
        <LayerSet>
          <LayerCaption><span>显示层</span><span>编辑</span></LayerCaption>
          {layers.map(([n, c]) => (
            <Layer key={n}><LayerName $c={c}>{n}</LayerName><Radio type="radio" name="layer" defaultChecked={n === "C2"} /></Layer>
          ))}
        </LayerSet>
        <HelpButton>?</HelpButton>
        <StatusButton aria-label="捕捉"><Icon w={20} h={20}><rect width="20" height="20" fill="#8c8c8c" stroke="none" /><path d="M0 4H6L12 10.5M0 9H4L10 14.5" strokeWidth="2" /><circle cx="13" cy="14" r="3" strokeWidth="2" fill="#fff" /></Icon></StatusButton>
        <StatusButton aria-label="十字准线"><Icon w={22} h={22}><circle cx="11" cy="11" r="5" strokeWidth="3" /><path d="M11 0V22M0 11H22" stroke="#f05050" strokeWidth="2" /><path d="M11 5V17M5 11H17" stroke="#300" /></Icon></StatusButton>
        <StatusButton aria-label="橡皮筋"><Icon w={22} h={20}><rect x="1" y="8" width="11" height="6" rx="3" transform="rotate(-25 6 11)" stroke="#444" strokeWidth="1.8" /><rect x="9" y="6" width="11" height="6" rx="3" transform="rotate(-25 14 9)" stroke="#444" strokeWidth="1.8" /><path d="M2 1L20 19M20 1L2 19" stroke="#e81818" strokeWidth="1.8" /></Icon></StatusButton>
        <Hint>编辑功能支持选择、移动、复制和删除对象。空格键=缩放视图区。支持用上档键多选对象。</Hint>
      </StatusBar>

      <TaskBar>
        <Task $w={26} $pad={8} aria-label="开始"><Icon w={13} h={13}><path d="M0 2L6 1V6H0ZM7 .9L13 0V6H7ZM0 7H6V12L0 11ZM7 7H13V13L7 12Z" fill="#fff" stroke="none" /></Icon></Task>
        <Task $w={118} $line>
          <Icon w={13} h={13}><circle cx="6.5" cy="6.5" r="6.5" fill="#1484d4" stroke="none" /><path d="M0 6C1-1 12-2 13 5C12 8 8 8 8 6C6 3 2 3 0 6Z" fill="#48c8a0" stroke="none" /><path d="M5 6C4 10 8 12 11 11" stroke="#0c4c98" strokeWidth="2" /></Icon>
          哪位老师有sprint-lay...
        </Task>
        <Task $w={118} $line $gap={5}>
          <Icon w={11} h={13}><path d="M1 1H8V12H1Z" fill="#f8d870" stroke="none" /><path d="M8 4H10V12H8Z" fill="#e0a830" stroke="none" /></Icon>
          D:\工具箱\Sprint-Lay...
        </Task>
        <Task $w={22} aria-label="K"><Icon w={14} h={14}><circle cx="7" cy="7" r="6.5" fill="#fff" stroke="#2088f0" /><circle cx="7" cy="7" r="5" fill="#1878e8" stroke="none" /><path d="M5 4V10M9 4L5.5 7L9 10" stroke="#fff" strokeWidth="1.4" /></Icon></Task>
        <Task $w={18} $pad={2} aria-label="消息"><Icon w={13} h={13}><rect width="13" height="13" rx="2" fill="#2c80f0" stroke="none" /><path d="M2 3L7 5L11 3L10 6L11 8L8 9L6 11L6 9L3 8L5 7Z" fill="#fff" stroke="none" /></Icon></Task>
        <Task $w={125} $pad={5} $gap={2} $on $line><Logo />Sprint-Layout 6.0</Task>
      </TaskBar>

      <Watermark>
        <MarkName>矿石收音机</MarkName>
        <MarkUrl href="#home">www.crystalradio.cn</MarkUrl>
      </Watermark>
    </Window>
  );
}
